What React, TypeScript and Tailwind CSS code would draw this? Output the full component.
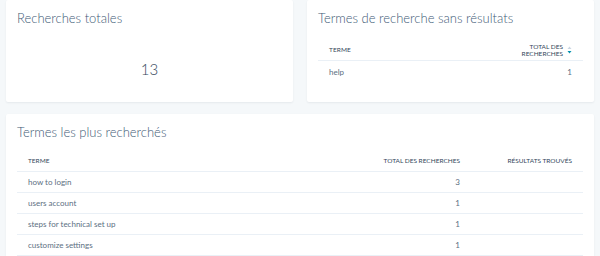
import React from "react";

interface Row {
  term: string;
  total: number;
}

const topTerms: Row[] = [
  { term: "how to login", total: 3 },
  { term: "users account", total: 1 },
  { term: "steps for technical set up", total: 1 },
  { term: "customize settings", total: 1 },
];

const Card: React.FC<{ className?: string; children: React.ReactNode }> = ({ className = "", children }) => (
  <div className={`bg-white rounded-[2px] shadow-[0_1px_2px_rgba(45,62,80,0.08)] ${className}`}>{children}</div>
);

const SortArrows = () => (
  <svg width="5" height="8" viewBox="0 0 5 8" className="ml-[4px] mt-[1px]">
    <path d="M2.5 0.5 L4.5 3 L0.5 3 Z" fill="#cbd6e2" />
    <path d="M2.5 7.5 L4.5 5 L0.5 5 Z" fill="#0091ae" />
  </svg>
);

export default function App() {
  return (
    <div
      className="w-[600px] h-[256px] overflow-hidden bg-[#f5f8fa] px-[6px]"
      style={{ fontFamily: "Lato, 'Open Sans', sans-serif" }}
    >
      <div className="grid grid-cols-2 gap-[14px]">
        {/* Recherches totales */}
        <Card className="h-[102px] px-[11px] pt-[10px]">
          <h2 className="text-[13px] font-light text-[#425b76] leading-[16px]">Recherches totales</h2>
          <div className="mt-[32px] text-center text-[15px] font-light text-[#33475b]">13</div>
        </Card>

        {/* Termes sans résultats */}
        <Card className="h-[102px] px-[11px] pt-[10px]">
          <h2 className="text-[13px] font-light text-[#425b76] leading-[16px]">Termes de recherche sans résultats</h2>
          <div className="mt-[13px]">
            <div className="flex items-center justify-between h-[22px] px-[11px] border-b border-[#eaf0f6]">
              <span className="text-[6.5px] uppercase text-[#33475b] tracking-[0.1px]">Terme</span>
              <div className="flex items-center">
                <span className="text-[6.5px] uppercase text-[#33475b] text-right leading-[7px]">
                  Total des
                  <br />
                  recherches
                </span>
                <SortArrows />
              </div>
            </div>
            <div className="flex items-center justify-between h-[21px] px-[11px]">
              <span className="text-[8px] text-[#5c6f82]">help</span>
              <span className="text-[8px] text-[#5c6f82]">1</span>
            </div>
          </div>
        </Card>
      </div>

      {/* Termes les plus recherchés */}
      <Card className="mt-[12px] px-[11px] pt-[10px] pb-[10px]">
        <h2 className="text-[13px] font-light text-[#425b76] leading-[16px]">Termes les plus recherchés</h2>
        <div className="mt-[11px]">
          <div className="grid grid-cols-[1fr_140px_112px] items-center h-[21px] px-[11px] border-b border-[#eaf0f6]">
            <span className="text-[6.5px] uppercase text-[#33475b]">Terme</span>
            <span className="text-[6.5px] uppercase text-[#33475b] text-right">Total des recherches</span>
            <span className="text-[6.5px] uppercase text-[#33475b] text-right">Résultats trouvés</span>
          </div>
          {topTerms.map((row, i) => (
            <div
              key={i}
              className="grid grid-cols-[1fr_140px_112px] items-center h-[21px] px-[11px] border-b border-[#eaf0f6]"
            >
              <span className="text-[8px] text-[#5c6f82]">{row.term}</span>
              <span className="text-[8px] text-[#5c6f82] text-right">{row.total}</span>
              <span />
            </div>
          ))}
        </div>
      </Card>
    </div>
  );
}
